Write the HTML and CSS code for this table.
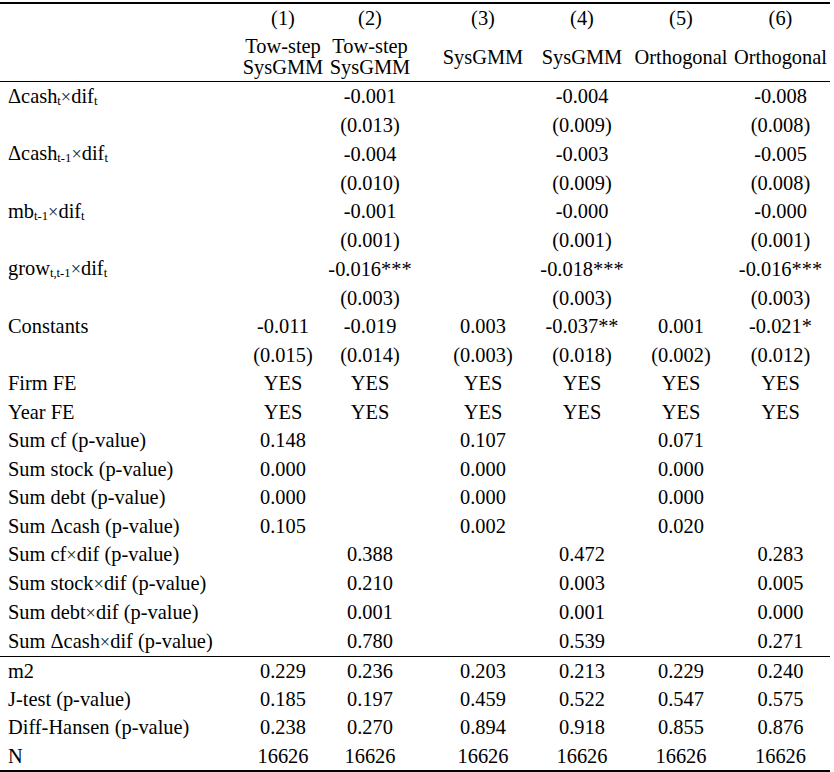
FILE: index.html
```html
<!DOCTYPE html>
<html>
<head>
<meta charset="utf-8">
<link rel="stylesheet" href="styles.css">
</head>
<body>
<div class="wrap">
<table class="results">
  <colgroup>
    <col class="w-label"><col class="w-c1"><col class="w-c2"><col class="w-c3"><col class="w-c4"><col class="w-c5"><col class="w-c6">
  </colgroup>
  <thead>
    <tr class="head-num">
      <th class="label"></th><th>(1)</th><th class="c2">(2)</th><th>(3)</th><th>(4)</th><th>(5)</th><th>(6)</th>
    </tr>
    <tr class="head-name">
      <th class="label"></th>
      <th><span class="two">Tow-step<br>SysGMM</span></th>
      <th class="c2"><span class="two">Tow-step<br>SysGMM</span></th>
      <th>SysGMM</th><th>SysGMM</th><th>Orthogonal</th><th>Orthogonal</th>
    </tr>
  </thead>
  <tbody class="main">
    <tr><td class="label">Δcash<span class="sub">t</span><span class="x">×</span>dif<span class="sub">t</span></td><td></td><td class="c2">-0.001</td><td></td><td>-0.004</td><td></td><td>-0.008</td></tr>
    <tr><td class="label"></td><td></td><td class="c2">(0.013)</td><td></td><td>(0.009)</td><td></td><td>(0.008)</td></tr>
    <tr><td class="label">Δcash<span class="sub">t-1</span><span class="x">×</span>dif<span class="sub">t</span></td><td></td><td class="c2">-0.004</td><td></td><td>-0.003</td><td></td><td>-0.005</td></tr>
    <tr><td class="label"></td><td></td><td class="c2">(0.010)</td><td></td><td>(0.009)</td><td></td><td>(0.008)</td></tr>
    <tr><td class="label">mb<span class="sub">t-1</span><span class="x">×</span>dif<span class="sub">t</span></td><td></td><td class="c2">-0.001</td><td></td><td>-0.000</td><td></td><td>-0.000</td></tr>
    <tr><td class="label"></td><td></td><td class="c2">(0.001)</td><td></td><td>(0.001)</td><td></td><td>(0.001)</td></tr>
    <tr><td class="label">grow<span class="sub">t,t-1</span><span class="x">×</span>dif<span class="sub">t</span></td><td></td><td class="c2">-0.016***</td><td></td><td>-0.018***</td><td></td><td>-0.016***</td></tr>
    <tr><td class="label"></td><td></td><td class="c2">(0.003)</td><td></td><td>(0.003)</td><td></td><td>(0.003)</td></tr>
    <tr><td class="label">Constants</td><td>-0.011</td><td class="c2">-0.019</td><td>0.003</td><td>-0.037**</td><td>0.001</td><td>-0.021*</td></tr>
    <tr><td class="label"></td><td>(0.015)</td><td class="c2">(0.014)</td><td>(0.003)</td><td>(0.018)</td><td>(0.002)</td><td>(0.012)</td></tr>
    <tr><td class="label">Firm FE</td><td>YES</td><td class="c2">YES</td><td>YES</td><td>YES</td><td>YES</td><td>YES</td></tr>
    <tr><td class="label">Year FE</td><td>YES</td><td class="c2">YES</td><td>YES</td><td>YES</td><td>YES</td><td>YES</td></tr>
    <tr><td class="label">Sum cf (p-value)</td><td>0.148</td><td class="c2"></td><td>0.107</td><td></td><td>0.071</td><td></td></tr>
    <tr><td class="label">Sum stock (p-value)</td><td>0.000</td><td class="c2"></td><td>0.000</td><td></td><td>0.000</td><td></td></tr>
    <tr><td class="label">Sum debt (p-value)</td><td>0.000</td><td class="c2"></td><td>0.000</td><td></td><td>0.000</td><td></td></tr>
    <tr><td class="label">Sum Δcash (p-value)</td><td>0.105</td><td class="c2"></td><td>0.002</td><td></td><td>0.020</td><td></td></tr>
    <tr><td class="label">Sum cf<span class="x">×</span>dif (p-value)</td><td></td><td class="c2">0.388</td><td></td><td>0.472</td><td></td><td>0.283</td></tr>
    <tr><td class="label">Sum stock<span class="x">×</span>dif (p-value)</td><td></td><td class="c2">0.210</td><td></td><td>0.003</td><td></td><td>0.005</td></tr>
    <tr><td class="label">Sum debt<span class="x">×</span>dif (p-value)</td><td></td><td class="c2">0.001</td><td></td><td>0.001</td><td></td><td>0.000</td></tr>
    <tr><td class="label">Sum Δcash<span class="x">×</span>dif (p-value)</td><td></td><td class="c2">0.780</td><td></td><td>0.539</td><td></td><td>0.271</td></tr>
  </tbody>
  <tbody class="stats">
    <tr class="stats-first"><td class="label">m2</td><td>0.229</td><td class="c2">0.236</td><td>0.203</td><td>0.213</td><td>0.229</td><td>0.240</td></tr>
    <tr><td class="label">J-test (p-value)</td><td>0.185</td><td class="c2">0.197</td><td>0.459</td><td>0.522</td><td>0.547</td><td>0.575</td></tr>
    <tr><td class="label">Diff-Hansen (p-value)</td><td>0.238</td><td class="c2">0.270</td><td>0.894</td><td>0.918</td><td>0.855</td><td>0.876</td></tr>
    <tr><td class="label">N</td><td>16626</td><td class="c2">16626</td><td>16626</td><td>16626</td><td>16626</td><td>16626</td></tr>
  </tbody>
</table>
</div>
</body>
</html>
```
FILE: styles.css
```css
html, body {
  margin: 0;
  padding: 0;
  background: #ffffff;
}

.wrap {
  padding-top: 2px;
}

.results {
  width: 830px;
  table-layout: fixed;
  border-collapse: collapse;
  border-top: 2px solid #000;
  border-bottom: 3px solid #000;
  font-family: "Liberation Serif", "Times New Roman", serif;
  font-size: 20.4px;
  color: #000;
}

.w-label { width: 240px; }
.w-c1 { width: 86px; }
.w-c2 { width: 107px; }
.w-c3 { width: 100px; }
.w-c4 { width: 98px; }
.w-c5 { width: 100px; }
.w-c6 { width: 99px; }

.results th,
.results td {
  padding: 0;
  font-weight: normal;
  text-align: center;
  vertical-align: middle;
  white-space: nowrap;
  line-height: 28px;
}

.results .c2 {
  padding-right: 19px;
}

.results .label {
  text-align: left;
  padding-left: 8px;
}

.head-num th {
  height: 28.4px;
}

.head-name th {
  height: 48.5px;
  border-bottom: 1px solid #000;
}

.two {
  display: block;
  line-height: 21px;
}

.main td {
  height: 28.5px;
}

.stats td {
  height: 28.2px;
}

.stats-first td {
  border-top: 1px solid #000;
}

.sub {
  font-size: 0.62em;
  line-height: 0;
  vertical-align: -0.18em;
}

.x {
  font-size: 0.9em;
  color: #222;
}
```
